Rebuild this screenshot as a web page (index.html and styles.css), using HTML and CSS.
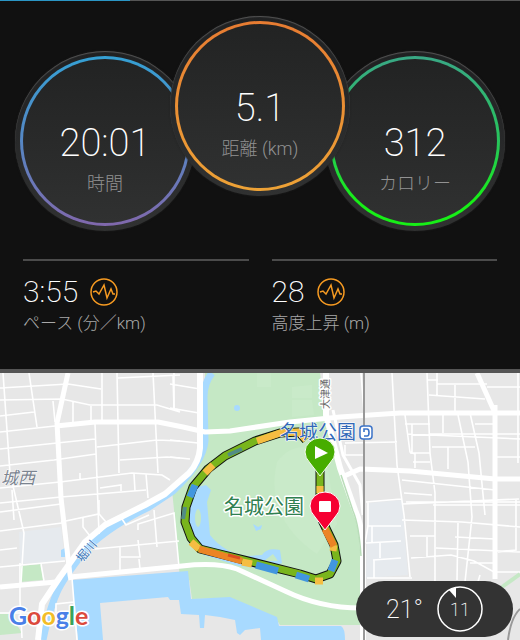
FILE: index.html
```html
<!DOCTYPE html>
<html lang="ja">
<head>
<meta charset="utf-8">
<meta name="viewport" content="width=device-width, initial-scale=1">
<title>ランニング</title>
<link rel="stylesheet" href="styles.css">
</head>
<body>
<main class="activity">
  <section class="summary">
    <div class="page-track"><div class="page-thumb"></div></div>
    <div class="dials">
      <div class="dial dial-time">
        <div class="dial-face"><span class="dial-value">20:01</span><span class="dial-label">時間</span></div>
      </div>
      <div class="dial dial-distance">
        <div class="dial-face"><span class="dial-value">5.1</span><span class="dial-label">距離 (km)</span></div>
      </div>
      <div class="dial dial-calories">
        <div class="dial-face"><span class="dial-value">312</span><span class="dial-label">カロリー</span></div>
      </div>
    </div>
    <div class="stats">
      <div class="stat">
        <div class="stat-row"><span class="stat-value">3:55</span>
          <svg class="pulse" viewBox="0 0 28 28"><circle cx="14" cy="14" r="13"/><path d="M3 14l3-1 3 3 5-9 3 13 4-9 2 5h2"/></svg></div>
        <div class="stat-label">ペース (分／km)</div>
      </div>
      <div class="stat">
        <div class="stat-row"><span class="stat-value">28</span>
          <svg class="pulse" viewBox="0 0 28 28"><circle cx="14" cy="14" r="13"/><path d="M3 14l3-1 3 3 5-9 3 13 4-9 2 5h2"/></svg></div>
        <div class="stat-label">高度上昇 (m)</div>
      </div>
    </div>
  </section>
  <section class="map">
    <svg class="map-canvas" viewBox="0 373 520 267" preserveAspectRatio="xMidYMid slice">
      <rect x="0" y="373" width="520" height="267" fill="#e7e7e7"/>
      <!-- blocks -->
      <g fill="#e6eaee">
        <path d="M19 532l42-5 4 34-45 3zM368 503l34-3 6 75-42 3z"/>
      </g>
      <g fill="#c5e8c5">
        <path d="M20 566l21-2 2 16-23 2zM0 614l10 0 12 19-22 2zM172 490l22-20v110h-14l-4-50z"/>
        <path d="M205 373h115l6 40 16 60 15 47 8 60v45h-85l-5-8-45-19-38 1-4-28-8-40-3-40 28-45z"/>
      </g>
      <g fill="#c9eac9">
        <path d="M257 373h14v14h-14zM292 387l20-2v13h-20zM292 400h20l2 15-22 2zM277 462c15-22 42-18 50 2l10 60-20 30c-30-20-50-50-40-92z"/>
      </g>
      <!-- water -->
      <g fill="#a8daff">
        <path d="M72 580l116-9 3 28 39-2 47 20 2 9h62q4 2 4 14h-84l-1-12-15 2-5 5-3-2-2-13-15-3-15-2-1 13h-4l-1-13-18-1-2-14h-9l-2-3-68 6 3 37H78z"/>
        <path d="M189 489l17-4 5 5-4 12 3 33q14 18 37 21l15-1q5-8 18-5l2 13-13 6-30-3-35-11-15-20-3-22z"/>
        <circle cx="237" cy="408" r="3"/><path d="M253 524l5 3 4-2-1 4-5 2zM61 550l4-2v9h-4z"/>
      </g>
      <path d="M212 373q-8 10-8 24l1 44q-2 22-32 50l-24 16q-38 18-62 41-20 25-28 40-9 18-16 52" fill="none" stroke="#a8daff" stroke-width="7"/>
      <ellipse cx="198" cy="518" rx="3" ry="9" fill="#c5e8c5"/>
      <path d="M264 561l9-7 5 7z" fill="#c5e8c5"/>
      <!-- minor streets -->
      <g fill="none" stroke="#fff" stroke-width="1.6">
        <path d="M0 388l68-4 33 5M0 400l62-1 28 6h67l23 7M0 416l34-4M0 432l55-6M0 449l95-10M0 466l54-6 42-6M0 488l60-6 72-9 30 2 8 5M0 503l61-6 85-7M0 512l61-8M0 531l62-8M0 550l17-2M0 567l65-6M3 373l7 100 14 60-3 50M29 373l8 54M102 373v50M117 373l2 100M153 373l5 100M118 378l62-3M173 376l1 33 6 1M95 424l4 110M97 447l60-7 23 1M120 460l47-3 13 1M73 401v22M91 406v14M146 474l2 24M134 474l1 17M100 488l21-3v6M80 473v7M53 401l2 21"/>
        <path d="M12 490l2 30M61 522l38-8 7 8M83 517v10l7 9M99 500v14M95 549l84-8M154 510l3 37M138 530v-6l36-11 5 54M120 547v24M121 557h19l-2-17M139 559l1 10M122 519l4 6 23-10M41 564l3 17M20 563v38l2 37M72 578l5 62M56 613v-9l18-2M0 613h40M170 384l30 5M170 408l29 5M170 440l28 3M170 457l20 2M174 373v37"/>
        <path d="M361 373l3 40M392 373l5 92 7 50 6 62M427 373l3 80 5 40v95M437 373v22M428 380h10M429 395l56 4M437 384h50M455 385v28M405 415l5 37 5 2v14M405 424h25M412 424v30M410 453h20M413 462h17M407 434l113 5M430 434h90M458 415l10 47 4 55-7 65M470 413l9 40 6 62M432 447h43M475 424h20M448 447v22M443 415v18M518 373v90M487 387h33M497 457h23M402 480l93 10M404 493l28 2M406 502h114M433 505h87M345 443l52-1M345 445v10h20M366 502l35-3M368 502v24l-3 17M402 504l117-5M367 526h34M372 526v16M366 543l35-2M380 543v15M373 560l28-2M367 578h45M374 560v18M402 520l60 2 58 5M410 536h25M427 537v20M411 558l40-3 23 6 20 11h26M436 548l84 4M458 523l-1 57M455 537l40 2M516 500v50l-18 2M470 563h25M480 575l-3 10"/>
      </g>
      <!-- main streets -->
      <g fill="none" stroke="#fff" stroke-linejoin="round">
        <path d="M68 373l-11 50 4 75 9 77 1 5" stroke-width="5"/>
        <path d="M56 426l39-4h63l25 5 22 5 25-1 60-9 50-5 60-4h155" stroke-width="5"/>
        <path d="M200 373v75q-1 14-11 25l-24 21-20 11-40 20-20 17-25 35-18 27-4 36" stroke-width="6"/>
        <path d="M0 587l56-5M70 577l112-11q35-4 55 3l48 22q35 17 76 17" stroke-width="5"/>
        <path d="M477 373l18 40M495 405v174" stroke-width="5"/>
        <path d="M342 477l18-8 50 2 85 8h25" stroke-width="5"/>
        <path d="M326 373v42l14 53 15 42q7 15 8 40v90" stroke-width="6"/>
        <path d="M333 410l10 45 17 30 3 30" stroke-width="3"/>
      </g>
      <path d="M341 475l12 36q6 14 8 45" fill="none" stroke="#b9ddb9" stroke-width="1.5"/>
      <path d="M502 587l18-13" stroke="#c5e8c5" stroke-width="4"/>
      <path d="M364 373v267M520 609q-9 8-12 31" fill="none" stroke="#999" stroke-width="2"/>
      <!-- running track, coloured by pace -->
      <g fill="none" stroke-linejoin="round">
        <path d="M306 440l-7-8-19 1-25 8-30 15-17 13-15 18-7 20-1 15 6 16 9 11 20 5 80 20 16 5 14-5 7-13-3-16-12-25M320 470v28" stroke="#111" stroke-width="9"/>
        <path d="M306 440l-7-8-19 1-25 8-30 15-17 13-15 18-7 20-1 15 6 16 9 11 20 5 80 20 16 5 14-5 7-13-3-16-12-25M320 470v28" stroke="#79b51c" stroke-width="7"/>
        <g stroke-width="7">
          <path d="M306 440l-7-8-19 1-23 8M213 465l-8 8M191 542l8 7M242 562l10 2M315 581l8 0M334 545l-1 6M320 486v7" stroke="#f5bd42"/>
          <path d="M195 485l-5 12M256 565l22 6M296 575l13 4M335 560l-4 11" stroke="#4296df"/>
          <path d="M199 549l43 12M325 529l9 17" stroke="#ec8425"/>
          <path d="M242 449l-14 6M185 507l-2 12" stroke="#528c86" stroke-width="4"/>
          <path d="M228 555l12 3" stroke="#dd4d20" stroke-width="3"/>
        </g>
      </g>
      <!-- place names -->
      <g class="place">
        <text class="district" x="1" y="484">城西</text>
        <text class="station" x="280" y="439">名城公園</text>
        <text class="park" x="224" y="514">名城公園</text>
        <text class="street" transform="translate(329 409) rotate(-90)">大津通</text>
        <text class="river" transform="translate(82 563) rotate(-50)">堀川</text>
      </g>
      <g fill="none" stroke="#3b73c8">
        <rect x="360" y="426" width="12" height="13" rx="3" fill="#fff" stroke-width="1.5"/>
        <path d="M364 432v-3h3q2 0 2 3.500t-2 3.500h-3" stroke-width="1.6"/>
      </g>
      <!-- start and finish pins -->
      <path d="M320 476l-10-13q-5-5-5-11a15 14 0 0 1 30 0q0 6-5 11z" fill="#47ad00" stroke="#f4fbef"/>
      <path d="M315 446v13l13-6z" fill="#fff"/>
      <path d="M325 530l-10-13q-5-5-5-11a15 14 0 0 1 30 0q0 6-5 11z" fill="#f60032" stroke="#fff"/>
      <rect x="319" y="501" width="12" height="11" rx="1" fill="#fff"/>
      <text class="google" x="9" y="625"><tspan fill="#4a80e8">G</tspan><tspan fill="#dc4a3d">o</tspan><tspan fill="#f3bd27">o</tspan><tspan fill="#4a80e8">g</tspan><tspan fill="#38a35a">l</tspan><tspan fill="#dc4a3d">e</tspan></text>
    </svg>
    <div class="weather">
      <span class="temperature">21°</span>
      <div class="wind">
        <svg class="wind-ring" viewBox="0 0 46 46"><circle cx="23" cy="23" r="22"/><path d="M12 4l7 8V1z"/></svg>
        <span class="wind-value">11</span>
      </div>
    </div>
  </section>
</main>
</body>
</html>
```
FILE: styles.css
```css
* { box-sizing: border-box; }

body {
  margin: 0;
  background: #111;
  color: #fff;
  font-family: Roboto, "Noto Sans CJK JP", sans-serif;
  font-weight: 200;
}

.activity {
  display: flex;
  flex-direction: column;
  min-height: 100vh;
}

.summary {
  background: #111;
  border-bottom: 4px solid #555;
}

.page-track { height: 1px; background: #555; }
.page-thumb { width: 25%; height: 1px; background: #2b96c5; }

.dials {
  display: flex;
  justify-content: center;
  align-items: flex-end;
  padding-top: 15px;
}

.dial {
  width: 180px;
  height: 180px;
  padding: 5px;
  border-radius: 50%;
  background: linear-gradient(#202122, #303131);
  box-shadow: inset 0 1px 1px #555, 0 0 2px #222;
}

.dial-distance {
  z-index: 1;
  margin: 0 -25px 35px;
}

.dial-face {
  display: flex;
  flex-direction: column;
  align-items: center;
  height: 100%;
  padding-top: 64px;
  border: 3px solid transparent;
  border-radius: 50%;
}

.dial-time .dial-face { background: linear-gradient(#222323, #303131) padding-box, linear-gradient(#35a0d4, #5687c4 50%, #8068ac) border-box; }
.dial-distance .dial-face { background: linear-gradient(#222323, #303131) padding-box, linear-gradient(#e77c32, #eda236) border-box; }
.dial-calories .dial-face { background: linear-gradient(#222323, #303131) padding-box, linear-gradient(#39a885, #27c45c 50%, #17ef17 85%) border-box; }

.dial-value { font-size: 38px; line-height: 40px; }
.dial-label { margin-top: 8px; font-size: 18px; font-weight: 300; line-height: 26px; color: #929292; }

.stats {
  display: grid;
  grid-template-columns: 1fr 1fr;
  gap: 23px;
  padding: 28px 23px 33px;
}

.stat { border-top: 2px solid #4b4b4b; padding-top: 15px; }
.stat-row { display: flex; align-items: center; gap: 12px; height: 32px; }
.stat-value { font-size: 30px; line-height: 32px; }
.stat-label { margin-top: 2px; font-size: 17px; font-weight: 300; line-height: 26px; color: #a8a8a8; }

.pulse { width: 28px; height: 28px; fill: none; stroke: #f79b22; stroke-width: 1.5; }

.map {
  position: relative;
  flex: 1;
  min-height: 267px;
  overflow: hidden;
}

.map-canvas { position: absolute; width: 100%; height: 100%; }

.place { paint-order: stroke; stroke: #fff; stroke-width: 3px; stroke-linejoin: round; font-weight: 400; }
.district { font-size: 17px; font-style: italic; fill: #7b8490; stroke-width: 1px; }
.station { font-size: 19px; fill: #3168b8; stroke-width: 1px; }
.park { font-size: 20px; fill: #2f8050; }
.street { font-size: 10px; fill: #666; }
.river { font-size: 12px; fill: #3b76b8; stroke-width: 1px; }

.google {
  font-family: Lato, sans-serif;
  font-size: 25px;
  font-weight: 700;
  paint-order: stroke;
  stroke: #fff;
  stroke-width: 3px;
  stroke-linejoin: round;
}

.weather {
  position: absolute;
  right: 7px;
  bottom: 3px;
  display: flex;
  align-items: center;
  gap: 14px;
  height: 56px;
  padding: 0 30px;
  border-radius: 28px;
  background: #333;
}

.temperature { font-size: 25px; }

.wind { display: grid; place-items: center; }
.wind-ring { grid-area: 1 / 1; width: 46px; height: 46px; fill: #fff; }
.wind-ring circle { fill: none; stroke: #fff; stroke-width: 1.5; }
.wind-value { grid-area: 1 / 1; font-size: 18px; }
```
